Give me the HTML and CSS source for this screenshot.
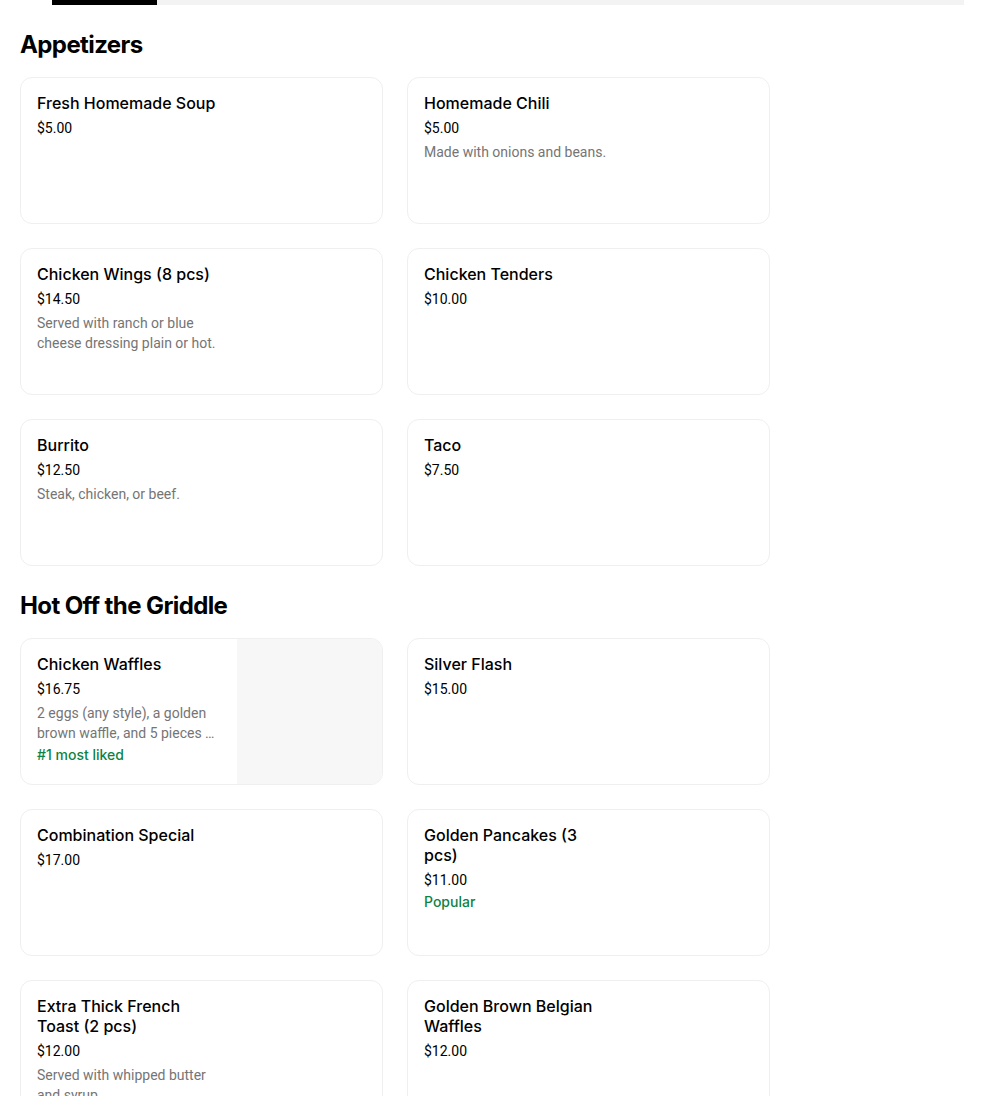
FILE: index.html
```html
<!DOCTYPE html>
<html lang="en">
<head>
<meta charset="utf-8">
<title>Menu</title>
<link rel="stylesheet" href="styles.css">
</head>
<body>
<div class="scroll-track"><div class="scroll-thumb"></div></div>
<main class="menu">
  <section class="section">
    <h2 class="section-title">Appetizers</h2>
    <div class="grid">
      <div class="card"><div class="info"><div class="name">Fresh Homemade Soup</div><div class="price">$5.00</div></div></div>
      <div class="card"><div class="info"><div class="name">Homemade Chili</div><div class="price">$5.00</div><div class="desc">Made with onions and beans.</div></div></div>
      <div class="card"><div class="info"><div class="name">Chicken Wings (8 pcs)</div><div class="price">$14.50</div><div class="desc">Served with ranch or blue cheese dressing plain or hot.</div></div></div>
      <div class="card"><div class="info"><div class="name">Chicken Tenders</div><div class="price">$10.00</div></div></div>
      <div class="card"><div class="info"><div class="name">Burrito</div><div class="price">$12.50</div><div class="desc">Steak, chicken, or beef.</div></div></div>
      <div class="card"><div class="info"><div class="name">Taco</div><div class="price">$7.50</div></div></div>
    </div>
  </section>
  <section class="section">
    <h2 class="section-title">Hot Off the Griddle</h2>
    <div class="grid">
      <div class="card"><div class="info"><div class="name">Chicken Waffles</div><div class="price">$16.75</div><div class="desc">2 eggs (any style), a golden brown waffle, and 5 pieces of crispy fried chicken.</div><div class="tag">#1 most liked</div></div><div class="thumb"></div></div>
      <div class="card"><div class="info"><div class="name">Silver Flash</div><div class="price">$15.00</div></div></div>
      <div class="card"><div class="info"><div class="name">Combination Special</div><div class="price">$17.00</div></div></div>
      <div class="card"><div class="info"><div class="name">Golden Pancakes (3 pcs)</div><div class="price">$11.00</div><div class="tag">Popular</div></div></div>
      <div class="card"><div class="info"><div class="name">Extra Thick French Toast (2 pcs)</div><div class="price">$12.00</div><div class="desc">Served with whipped butter and syrup.</div></div></div>
      <div class="card"><div class="info"><div class="name">Golden Brown Belgian Waffles</div><div class="price">$12.00</div></div></div>
    </div>
  </section>
</main>
</body>
</html>
```
FILE: styles.css
```css
* { box-sizing: border-box; }
html, body { margin: 0; padding: 0; background: #fff; }
body {
  font-family: Inter, "Noto Sans", sans-serif;
  color: #000;
  -webkit-font-smoothing: antialiased;
}
.scroll-track {
  margin-left: 52px;
  width: 912px;
  height: 5px;
  background: #f3f3f3;
}
.scroll-thumb {
  width: 105px;
  height: 5px;
  background: #000;
}
.menu { padding: 0 20px; }
.section-title {
  margin: 24px 0 16px;
  font-size: 24px;
  line-height: 32px;
  font-weight: 700;
  letter-spacing: -0.6px;
}
.grid {
  display: grid;
  grid-template-columns: 363px 363px;
  gap: 24px;
}
.card {
  display: flex;
  height: 147px;
  border: 1px solid #efefef;
  border-radius: 12px;
  overflow: hidden;
}
.info {
  width: 216px;
  padding: 15px 16px 16px;
  display: flex;
  flex-direction: column;
}
.name {
  font-size: 16px;
  line-height: 20px;
  font-weight: 500;
  color: #000;
}
.price {
  margin-top: 5px;
  font-family: Roboto, "Noto Sans", sans-serif;
  font-size: 14px;
  line-height: 20px;
  color: #000;
}
.desc {
  margin-top: 4px;
  font-family: Roboto, "Noto Sans", sans-serif;
  font-size: 14px;
  line-height: 20px;
  color: #757575;
  display: -webkit-box;
  -webkit-line-clamp: 2;
  -webkit-box-orient: vertical;
  overflow: hidden;
}
.tag {
  margin-top: 2px;
  font-size: 14px;
  line-height: 20px;
  font-weight: 500;
  color: #0e8345;
}
.thumb {
  width: 145px;
  margin-left: auto;
  background: #f7f7f7;
}
```
